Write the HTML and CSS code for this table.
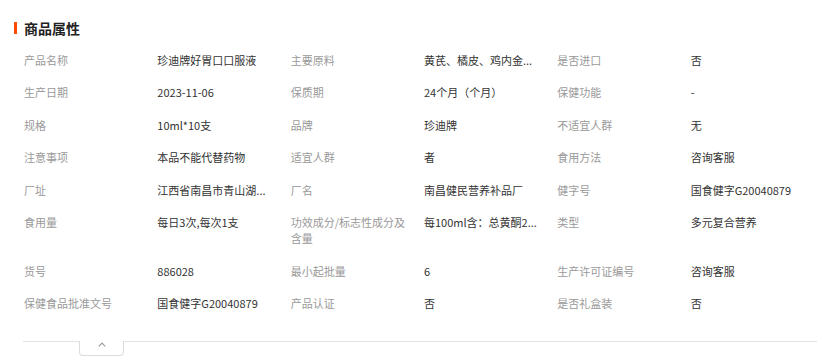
FILE: index.html
```html
<!DOCTYPE html>
<html lang="zh-CN">
<head>
<meta charset="utf-8">
<title>商品属性</title>
<link rel="stylesheet" href="styles.css">
</head>
<body>
<div class="page">
  <h2 class="title"><span class="title-bar"></span>商品属性</h2>
  <div class="attrs">
    <div class="k">产品名称</div><div class="v">珍迪牌好胃口口服液</div>
    <div class="k">主要原料</div><div class="v">黄芪、橘皮、鸡内金...</div>
    <div class="k">是否进口</div><div class="v">否</div>

    <div class="k">生产日期</div><div class="v">2023-11-06</div>
    <div class="k">保质期</div><div class="v">24个月（个月）</div>
    <div class="k">保健功能</div><div class="v">-</div>

    <div class="k">规格</div><div class="v">10ml*10支</div>
    <div class="k">品牌</div><div class="v">珍迪牌</div>
    <div class="k">不适宜人群</div><div class="v">无</div>

    <div class="k">注意事项</div><div class="v">本品不能代替药物</div>
    <div class="k">适宜人群</div><div class="v">者</div>
    <div class="k">食用方法</div><div class="v">咨询客服</div>

    <div class="k">厂址</div><div class="v">江西省南昌市青山湖...</div>
    <div class="k">厂名</div><div class="v">南昌健民营养补品厂</div>
    <div class="k">健字号</div><div class="v">国食健字G20040879</div>

    <div class="k">食用量</div><div class="v">每日3次,每次1支</div>
    <div class="k">功效成分/标志性成分及含量</div><div class="v">每100ml含：总黄酮2...</div>
    <div class="k">类型</div><div class="v">多元复合营养</div>

    <div class="k">货号</div><div class="v">886028</div>
    <div class="k">最小起批量</div><div class="v">6</div>
    <div class="k">生产许可证编号</div><div class="v">咨询客服</div>

    <div class="k">保健食品批准文号</div><div class="v">国食健字G20040879</div>
    <div class="k">产品认证</div><div class="v">否</div>
    <div class="k">是否礼盒装</div><div class="v">否</div>
  </div>
  <div class="fold">
    <div class="fold-line fold-line-left"></div>
    <div class="fold-tab">
      <svg class="fold-icon" width="8" height="5" viewBox="0 0 8 5" aria-hidden="true">
        <path d="M0.8 4.3 L4 1.1 L7.2 4.3" fill="none" stroke="#999" stroke-width="1.2"/>
      </svg>
    </div>
    <div class="fold-line fold-line-right"></div>
  </div>
</div>
</body>
</html>
```

FILE: styles.css
```css
html, body {
  margin: 0;
  padding: 0;
  background: #fff;
  overflow: hidden;
}

.page {
  padding: 18px 0 0 14px;
  font-family: "Noto Sans CJK SC", "Noto Sans", sans-serif;
  font-size: 11px;
  color: #333;
}

.title {
  display: flex;
  align-items: center;
  gap: 7px;
  margin: 0;
  height: 20px;
  line-height: 20px;
  font-size: 14px;
  font-weight: 700;
  color: #222;
}

.title-bar {
  width: 3px;
  height: 12px;
  background: #ff4a00;
}

.attrs {
  display: grid;
  grid-template-columns: repeat(6, 133.33px);
  margin: 5.5px 0 0 10px;
  width: 800px;
}

.k,
.v {
  padding: 8px 14px 8.5px 0;
  line-height: 16px;
}

.k {
  color: #999;
}

.v {
  color: #333;
}

.fold {
  display: flex;
  align-items: flex-start;
  margin: 21px 0 0 9px;
}

.fold-line {
  border-top: 1px solid #e3e3e3;
}

.fold-line-left {
  width: 56px;
}

.fold-line-right {
  flex: 1;
}

.fold-tab {
  box-sizing: border-box;
  width: 45px;
  height: 15px;
  border: 1px solid #dcdcdc;
  border-top: none;
  border-radius: 0 0 4px 4px;
  display: flex;
  justify-content: center;
  align-items: flex-start;
  padding-top: 1px;
  background: #fff;
}

.fold-icon {
  display: block;
}
```
